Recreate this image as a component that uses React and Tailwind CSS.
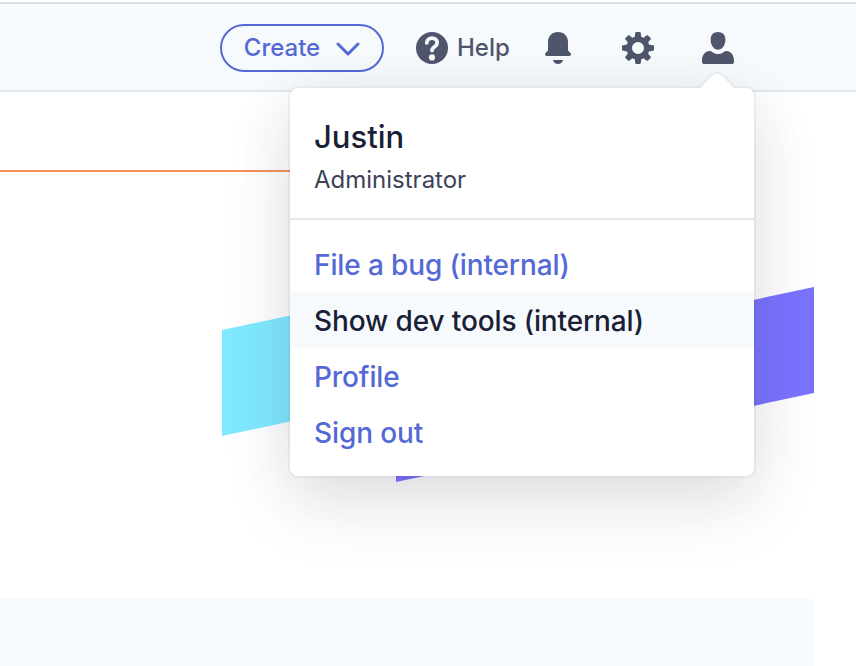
import React from "react";

function CreateButton() {
  return (
    <button className="mr-8 flex h-12 w-[164px] items-center justify-between rounded-full border-2 border-[#5469d4] pr-[22px] pl-[21px] text-[24px] font-medium text-[#5469d4]">
      <span className="w-[78px] whitespace-nowrap">Create</span>
      <svg className="mt-[2px]" width="24" height="14" viewBox="0 0 24 14" fill="none" stroke="currentColor" strokeWidth="3" strokeLinecap="round" strokeLinejoin="round">
        <path d="M2 2l10 10L22 2" />
      </svg>
    </button>
  );
}

function HelpIcon() {
  return (
    <svg width="32" height="32" viewBox="0 0 32 32">
      <circle cx="16" cy="16" r="16" fill="currentColor" />
      <path d="M10.800 10.800C11 8 13.100 6.200 16 6.200c3 0 5.200 1.800 5.200 4.600 0 4-5.200 4-5.200 7.600" fill="none" stroke="#f7fafc" strokeWidth="3.800" strokeLinecap="round" />
      <circle cx="16" cy="25.400" r="3.100" fill="#f7fafc" />
    </svg>
  );
}

function BellIcon() {
  return (
    <svg width="26" height="32" viewBox="0 0 26 32" fill="currentColor">
      <path d="M3 10C3 4 7 0 13 0s10 4 10 10v8.500l2.400 2.500c1.200 1.300.4 3-1.200 3H1.800C.2 24-.6 22.300.6 21L3 18.500z" />
      <path d="M8 28h10c-.6 2.500-2.500 4-5 4s-4.400-1.500-5-4z" />
    </svg>
  );
}

function GearIcon() {
  return (
    <svg width="32" height="32" viewBox="0 0 32 32" fill="none" stroke="currentColor">
      <circle cx="16" cy="16" r="8.800" strokeWidth="5.600" />
      <g fill="currentColor" stroke="none">
        {[0, 45, 90, 135, 180, 225, 270, 315].map((angle) => (
          <path key={angle} d="M12.600 6l.7-5.200c.1-.5.4-.8.900-.8h3.600c.5 0 .8.300.9.800L19.400 6z" transform={`rotate(${angle} 16 16)`} />
        ))}
      </g>
    </svg>
  );
}

function UserIcon() {
  return (
    <svg width="32" height="32" viewBox="0 0 32 32" fill="currentColor">
      <path d="M16 0c4.600 0 7.400 2.800 7.400 7.600 0 6-3.200 10.200-7.400 10.200S8.600 13.600 8.600 7.600C8.600 2.800 11.400 0 16 0z" />
      <path d="M7.800 19c1 0 1.700.3 2.400.9 3.500 2.800 8.100 2.800 11.600 0 .7-.6 1.400-.9 2.400-.9 4.800.2 7.800 4.300 7.800 9.500V30c0 1.200-.8 2-2 2H2c-1.200 0-2-.8-2-2v-1.500C0 23.300 3 19.200 7.800 19z" />
    </svg>
  );
}

function TopBar() {
  return (
    <header className="mt-[2px] flex h-[90px] items-center border-t-2 border-b-2 border-t-[#dcdfe4] border-b-[#e3e8ee] bg-[#f7fafc] pt-[2px] pl-[220px] text-[#4f566b]">
      <CreateButton />
      <div className="flex w-[129px] items-center gap-[9px]">
        <HelpIcon />
        <span className="text-[24px] font-medium">Help</span>
      </div>
      <div className="flex w-[77px]">
        <BellIcon />
      </div>
      <div className="flex w-20">
        <GearIcon />
      </div>
      <UserIcon />
    </header>
  );
}

function Backdrop() {
  return (
    <main>
      <div className="h-[78px]" />
      <div className="h-[2px] w-[400px] bg-[#f5925e]" />
      <svg className="block" width="856" height="426" viewBox="0 172 856 426">
        <path d="M222 330L396 293V399L222 436z" fill="#80e9ff" />
        <path d="M396 376L814 287V393L396 482z" fill="#7a73ff" />
      </svg>
      <div className="h-[68px] w-[814px] rounded-tr-lg bg-[#f7fafc]" />
    </main>
  );
}

function MenuItem({ children, active }) {
  return (
    <li className={active ? "flex h-14 items-center bg-[#f7fafc] px-6 pt-px text-[#1a1f36]" : "flex h-14 items-center px-6 pt-px text-[#5469d4]"}>
      {children}
    </li>
  );
}

function UserMenu() {
  return (
    <div className="absolute top-[88px] left-[290px] h-[388px] w-[464px] rounded-lg bg-white shadow-[0_0_0_2px_rgba(60,66,87,0.05),0_30px_70px_rgba(49,49,93,0.1),0_10px_60px_rgba(0,0,0,0.07)]">
      <svg className="absolute -top-4 right-[17px]" width="40" height="18" viewBox="0 0 40 18">
        <path d="M3 16L14.500 4.300Q20-.500 25.500 4.300L37 16V18H3z" fill="#fff" />
        <path d="M2.300 15.300L13.800 3.600Q20-2 26.200 3.600L37.700 15.300" fill="none" stroke="#3c4257" strokeOpacity=".06" strokeWidth="2" />
      </svg>
      <div className="h-[132px] border-b-2 border-[#e3e8ee] px-6 pt-7">
        <div className="text-[31px] leading-[42px] font-medium text-[#1a1f36]">Justin</div>
        <div className="pt-[6px] text-[24px] leading-8 text-[#3c4257]">Administrator</div>
      </div>
      <ul className="pt-4 text-[28px] font-medium tracking-[-0.12px]">
        <MenuItem>File a bug (internal)</MenuItem>
        <MenuItem active>Show dev tools (internal)</MenuItem>
        <MenuItem>Profile</MenuItem>
        <MenuItem>Sign out</MenuItem>
      </ul>
    </div>
  );
}

export default function App() {
  return (
    <div className="relative flow-root h-[666px] w-[856px] overflow-hidden bg-white font-['Inter',sans-serif]">
      <TopBar />
      <Backdrop />
      <UserMenu />
    </div>
  );
}
